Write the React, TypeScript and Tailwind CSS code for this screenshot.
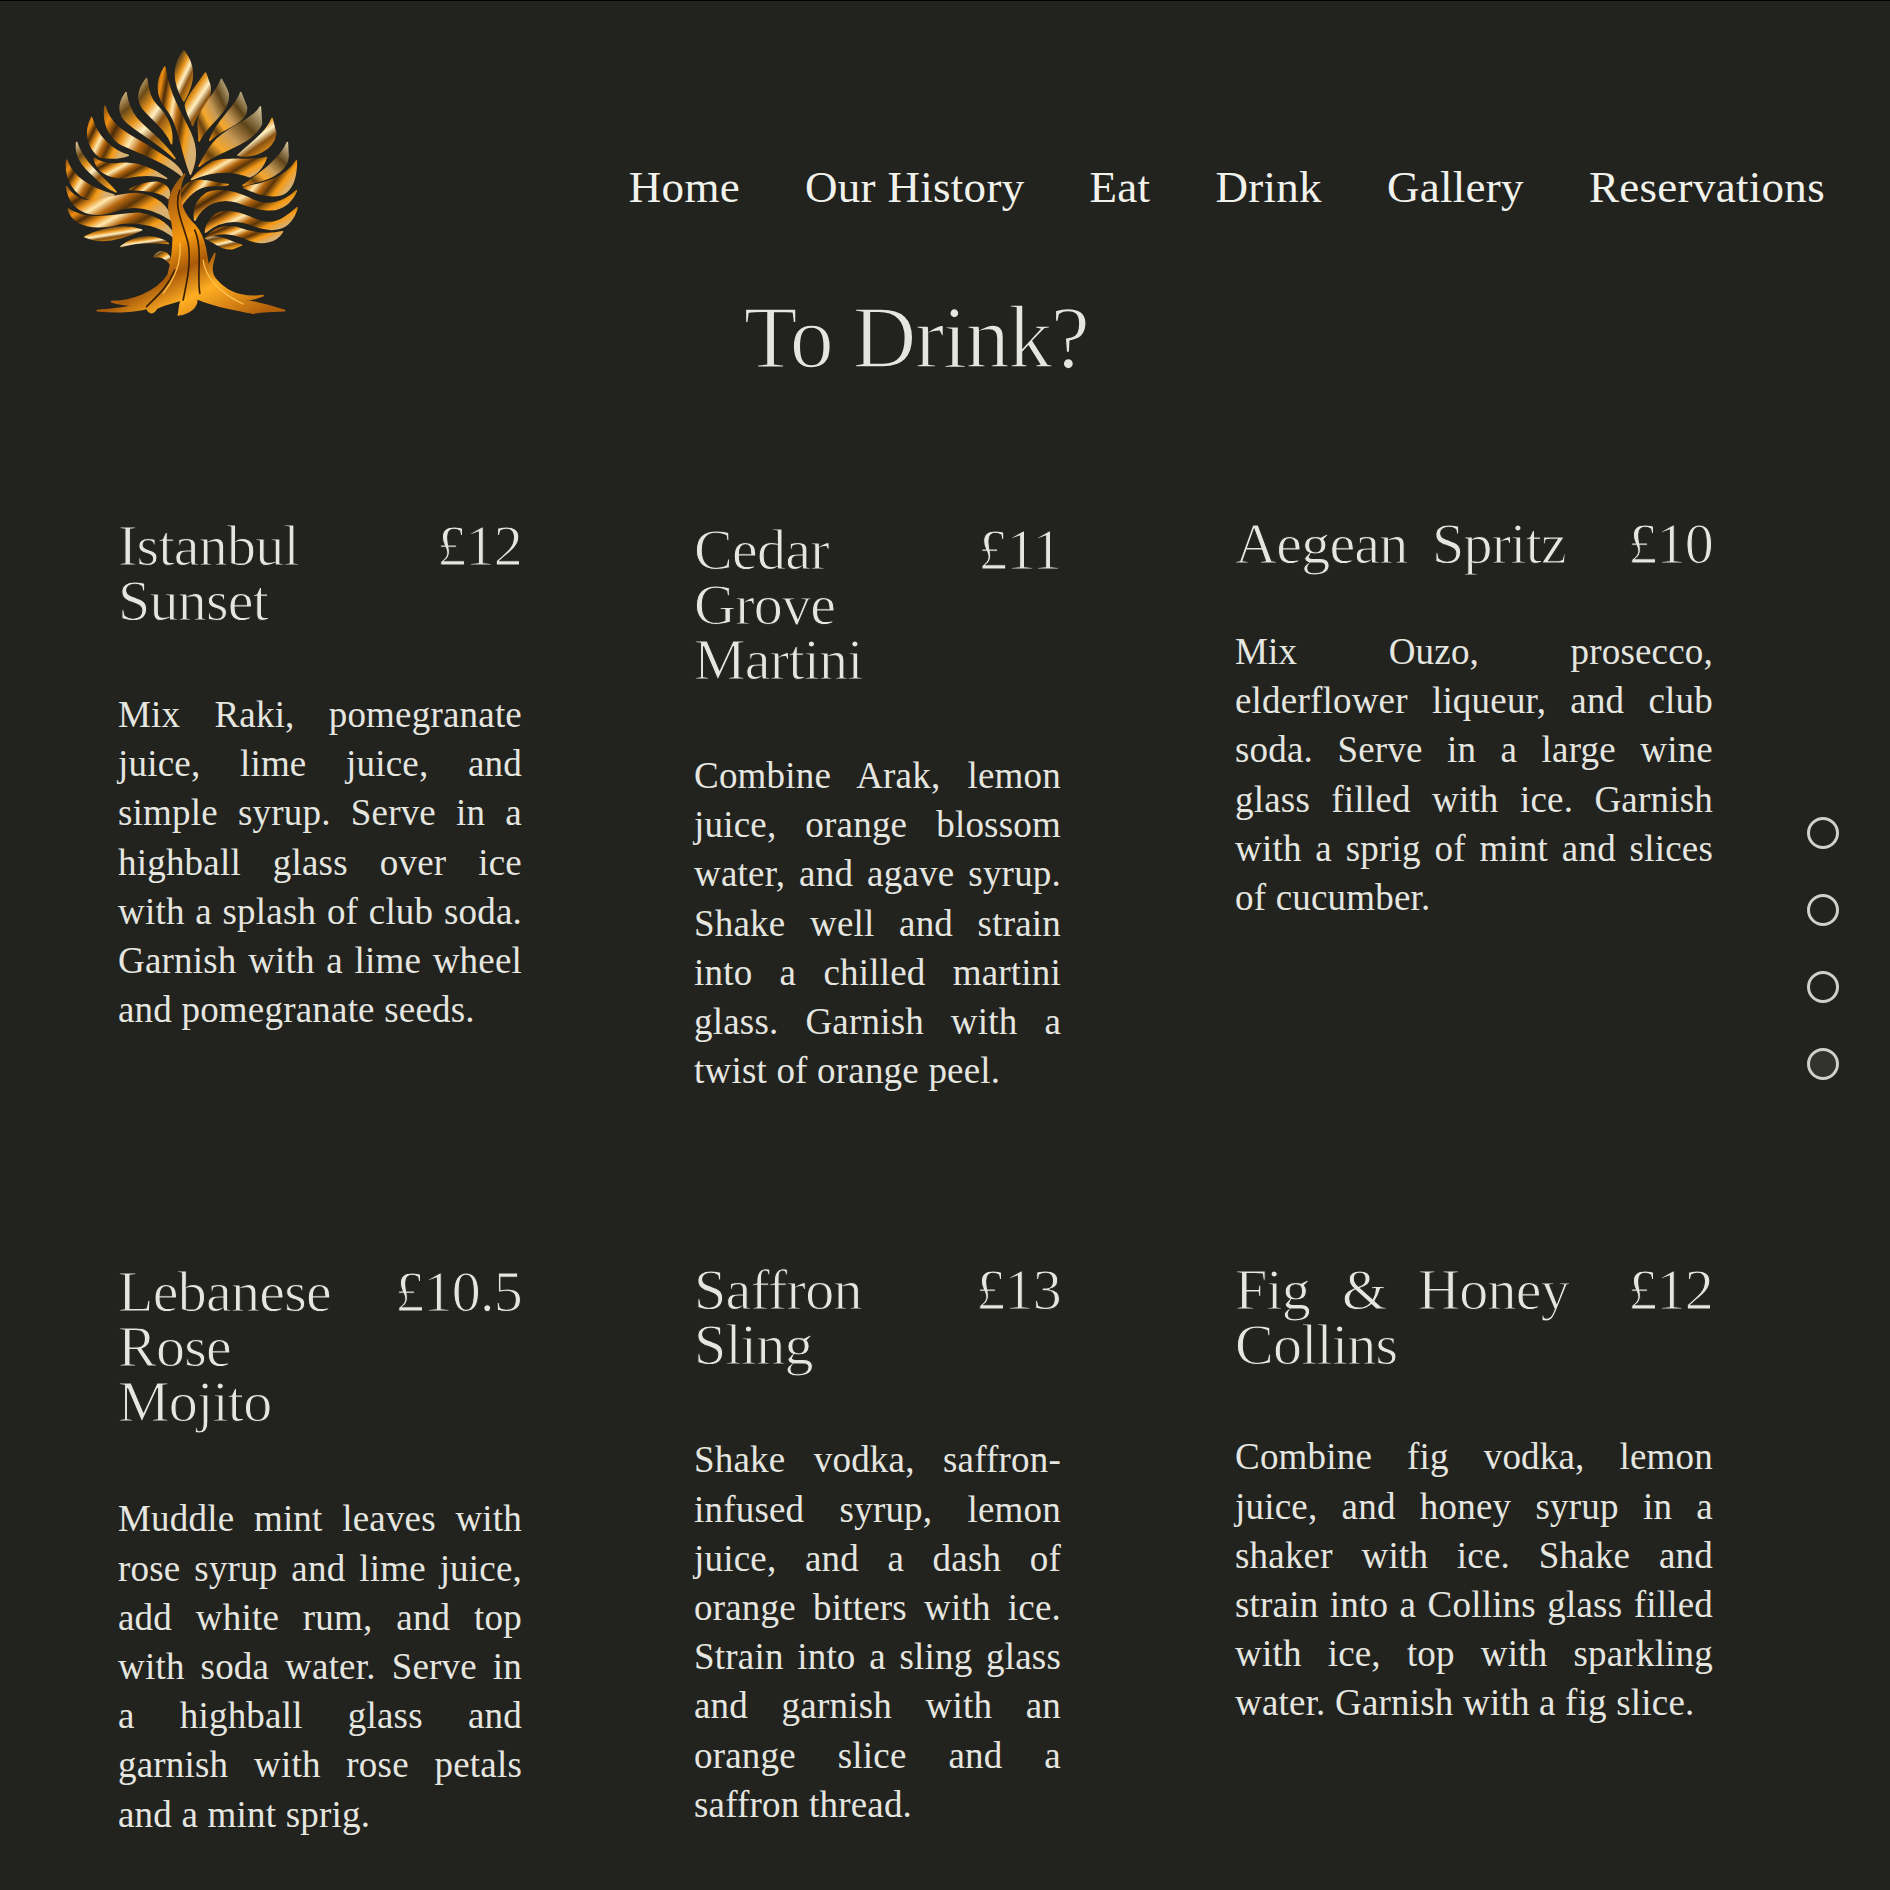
const navItems = ["Home", "Our History", "Eat", "Drink", "Gallery", "Reservations"];

type Drink = {
  title: string[];
  spreadWidth?: string;
  price: string;
  lines: string[];
  className: string;
  bodyClass: string;
};

const drinks: Drink[] = [
  {
    title: ["Istanbul", "Sunset"],
    price: "£12",
    className: "mt-[2px]",
    bodyClass: "mt-[62px]",
    lines: [
      "Mix Raki, pomegranate",
      "juice, lime juice, and",
      "simple syrup. Serve in a",
      "highball glass over ice",
      "with a splash of club soda.",
      "Garnish with a lime wheel",
      "and pomegranate seeds.",
    ],
  },
  {
    title: ["Cedar", "Grove", "Martini"],
    price: "£11",
    className: "mt-[6px] pr-[2px]",
    bodyClass: "mt-[64px]",
    lines: [
      "Combine Arak, lemon",
      "juice, orange blossom",
      "water, and agave syrup.",
      "Shake well and strain",
      "into a chilled martini",
      "glass. Garnish with a",
      "twist of orange peel.",
    ],
  },
  {
    title: ["Aegean Spritz"],
    spreadWidth: "w-[331px]",
    price: "£10",
    className: "",
    bodyClass: "mt-[56px]",
    lines: [
      "Mix Ouzo, prosecco,",
      "elderflower liqueur, and club",
      "soda. Serve in a large wine",
      "glass filled with ice. Garnish",
      "with a sprig of mint and slices",
      "of cucumber.",
    ],
  },
  {
    title: ["Lebanese", "Rose", "Mojito"],
    price: "£10.5",
    className: "mt-[2px]",
    bodyClass: "mt-[65px]",
    lines: [
      "Muddle mint leaves with",
      "rose syrup and lime juice,",
      "add white rum, and top",
      "with soda water. Serve in",
      "a highball glass and",
      "garnish with rose petals",
      "and a mint sprig.",
    ],
  },
  {
    title: ["Saffron", "Sling"],
    price: "£13",
    className: "pr-[2px]",
    bodyClass: "mt-[63px]",
    lines: [
      "Shake vodka, saffron-",
      "infused syrup, lemon",
      "juice, and a dash of",
      "orange bitters with ice.",
      "Strain into a sling glass",
      "and garnish with an",
      "orange slice and a",
      "saffron thread.",
    ],
  },
  {
    title: ["Fig & Honey", "Collins"],
    spreadWidth: "w-[334px]",
    price: "£12",
    className: "",
    bodyClass: "mt-[60px]",
    lines: [
      "Combine fig vodka, lemon",
      "juice, and honey syrup in a",
      "shaker with ice. Shake and",
      "strain into a Collins glass filled",
      "with ice, top with sparkling",
      "water. Garnish with a fig slice.",
    ],
  },
];

const leaves: [string, string][] = [
  ["M432 62C405 100 392 140 432 212C472 140 460 100 432 62Z", "url(#gold2)"],
  ["M375 110C350 150 345 190 380 235C420 285 420 350 452 432C475 380 470 340 440 285C420 240 385 190 375 110Z", "url(#gold1)"],
  ["M497 128C470 170 440 200 437 225C440 250 455 270 458 285C470 240 520 220 510 165Z", "url(#gold2)"],
  ["M545 147C530 190 490 220 475 270C475 295 478 315 478 332C500 280 570 250 565 190C560 170 550 160 545 147Z", "url(#gold3)"],
  ["M603 187C590 230 530 270 510 330C550 290 625 280 620 230Z", "url(#gold3)"],
  ["M662 230C640 270 560 290 520 340C500 365 490 385 478 408C530 360 640 345 665 280Z", "url(#gold3)"],
  ["M697 265C680 310 630 340 595 375C640 385 700 360 708 310Z", "url(#gold2)"],
  ["M743 337C720 390 660 430 610 466C680 450 740 430 745 380Z", "url(#gold3)"],
  ["M770 392C740 440 680 460 612 472C650 490 710 510 740 485C765 465 770 430 770 392Z", "url(#gold1)"],
  ["M680 382C640 395 560 380 520 395C490 410 470 430 455 448C520 420 580 420 630 440C655 430 670 410 680 382Z", "url(#gold1)"],
  ["M565 463C520 460 480 440 445 460C420 480 410 510 415 545C430 510 460 480 490 470C520 462 545 470 565 463Z", "url(#gold1)"],
  ["M770 482C730 520 680 530 640 510C600 490 540 470 500 490C470 510 460 540 465 570C490 520 540 500 590 515C650 535 730 570 770 482Z", "url(#gold1)"],
  ["M772 533C730 570 700 590 650 570C610 550 550 530 520 560C505 575 497 590 497 606C540 570 590 565 640 585C690 605 750 610 772 533Z", "url(#gold1)"],
  ["M728 605C690 615 640 610 590 592C550 585 520 595 497 625C540 600 590 610 630 630C670 645 710 635 728 605Z", "url(#gold1)"],
  ["M605 645C575 640 540 610 500 625C530 640 550 660 580 655Z", "url(#gold2)"],
  ["M320 145C300 170 285 200 310 235C340 270 380 300 395 340C400 300 385 260 350 225C325 200 325 170 320 145Z", "url(#gold2)"],
  ["M258 187C235 220 235 250 260 275C300 310 360 340 405 385C370 330 320 300 290 265C270 240 262 215 258 187Z", "url(#gold2)"],
  ["M195 228C190 270 200 310 240 340C300 370 370 390 430 440C420 400 370 380 320 345C270 315 210 290 195 228Z", "url(#gold1)"],
  ["M155 262C135 300 140 350 180 380C210 385 240 385 265 375C220 365 170 320 155 262Z", "url(#gold1)"],
  ["M163 385C170 420 200 445 260 442C300 435 340 430 380 445C340 415 290 395 240 400C210 405 185 400 163 385Z", "url(#gold1)"],
  ["M110 337C105 380 130 410 165 440C185 460 205 475 228 485C190 440 130 400 110 337Z", "url(#gold2)"],
  ["M80 390C75 440 100 500 160 510C185 512 205 505 222 495C170 480 100 450 80 390Z", "url(#gold1)"],
  ["M80 470C90 540 150 570 230 540C290 520 350 540 395 570C385 530 350 495 290 490C230 490 170 520 130 510C105 500 90 490 80 470Z", "url(#gold1)"],
  ["M85 537C100 590 170 600 240 580C300 570 370 590 405 625C395 590 360 560 300 550C230 550 150 580 85 537Z", "url(#gold1)"],
  ["M135 620C180 640 240 630 305 600C260 585 200 590 135 620Z", "url(#gold2)"],
  ["M243 650C290 635 340 635 385 640C350 615 290 610 243 650Z", "url(#gold2)"],
  ["M270 478C310 480 360 480 385 505C395 485 385 465 355 457C320 455 295 465 270 478Z", "url(#gold1)"],
  ["M343 680C360 655 390 660 398 710C385 690 365 675 343 680Z", "url(#gold2)"],
  [
    "M435 432C395 470 375 520 395 570C405 610 400 680 385 735C350 790 270 815 215 815C240 825 270 825 290 825C250 835 210 838 172 842C230 848 290 845 320 835C330 852 340 852 350 835C380 820 410 815 425 810C415 830 420 850 415 855C450 850 475 830 470 805C520 830 600 840 640 850C650 845 735 842 735 842C680 825 640 815 610 810C640 810 660 800 670 797C610 805 560 790 525 745C505 715 525 690 525 670L505 710C500 670 495 610 455 575C425 545 405 490 435 432Z",
    "url(#trunk)",
  ],
];

function TreeLogo() {
  return (
    <svg viewBox="75 60 700 800" className="h-[267px] w-[233px] shrink-0">
      <defs>
        <linearGradient id="gold1" x1="0" y1="0" x2="1" y2="0.5">
          <stop offset="0" stopColor="#8a5212" />
          <stop offset="0.12" stopColor="#f08f12" />
          <stop offset="0.24" stopColor="#4a2a08" />
          <stop offset="0.36" stopColor="#e8901a" />
          <stop offset="0.46" stopColor="#ffe9b0" />
          <stop offset="0.58" stopColor="#b8680f" />
          <stop offset="0.7" stopColor="#5a3508" />
          <stop offset="0.84" stopColor="#f59a14" />
          <stop offset="1" stopColor="#d8b070" />
        </linearGradient>
        <linearGradient id="gold2" x1="0" y1="0" x2="0.7" y2="1">
          <stop offset="0" stopColor="#e0c48e" />
          <stop offset="0.22" stopColor="#6a4a18" />
          <stop offset="0.42" stopColor="#e8951c" />
          <stop offset="0.58" stopColor="#fff0c4" />
          <stop offset="0.74" stopColor="#8a5210" />
          <stop offset="1" stopColor="#f0a020" />
        </linearGradient>
        <linearGradient id="gold3" x1="1" y1="0" x2="0" y2="1">
          <stop offset="0" stopColor="#d8c8a0" />
          <stop offset="0.28" stopColor="#5e4318" />
          <stop offset="0.5" stopColor="#c89a58" />
          <stop offset="0.68" stopColor="#f6a72a" />
          <stop offset="0.82" stopColor="#6a4210" />
          <stop offset="1" stopColor="#ef9012" />
        </linearGradient>
        <linearGradient id="trunk" x1="0.15" y1="0" x2="0.85" y2="1">
          <stop offset="0" stopColor="#6e4614" />
          <stop offset="0.25" stopColor="#b8680e" />
          <stop offset="0.45" stopColor="#f5980f" />
          <stop offset="0.6" stopColor="#a85a0a" />
          <stop offset="0.75" stopColor="#ffae22" />
          <stop offset="1" stopColor="#b4600a" />
        </linearGradient>
      </defs>
      {leaves.map(([d, fill]) => (
        <path key={d} d={d} fill={fill} stroke={fill} strokeWidth="5" strokeLinejoin="round" />
      ))}
      <g fill="none" stroke="#3a2006" strokeWidth="5" strokeLinecap="round">
        <path d="M420 480C400 530 430 580 445 640C455 700 440 760 430 810" />
        <path d="M465 600C490 660 470 730 480 790" />
        <path d="M405 720C385 770 350 800 320 830" />
      </g>
      <g fill="none" stroke="#ffc04a" strokeWidth="4" strokeLinecap="round">
        <path d="M490 690C495 740 540 790 610 822" />
        <path d="M420 640C425 690 410 740 370 790" />
      </g>
    </svg>
  );
}

function DrinkCard({ title, spreadWidth, price, lines, className, bodyClass }: Drink) {
  return (
    <article className={className}>
      <div className="flex items-start justify-between font-['Liberation_Serif',serif] text-[58px] leading-[55px] tracking-[-0.75px] text-[#e6e6e0] [-webkit-text-stroke:1px_#22231e]">
        <h2 className={spreadWidth}>
          {title.map((line, i) => (
            <span
              key={line}
              className={
                spreadWidth && i === 0
                  ? "block [text-align-last:justify]"
                  : "block whitespace-nowrap"
              }
            >
              {line}
            </span>
          ))}
        </h2>
        <span>{price}</span>
      </div>
      <p
        className={`${bodyClass} font-['Liberation_Serif',serif] text-[37px] leading-[49.2px] tracking-[0.2px] text-[#e6e6e0]`}
      >
        {lines.map((line, i) => (
          <span
            key={line}
            className={
              i === lines.length - 1
                ? "block whitespace-nowrap"
                : "block [text-align-last:justify]"
            }
          >
            {line}
          </span>
        ))}
      </p>
    </article>
  );
}

export default function App() {
  return (
    <main className="relative h-[1890px] overflow-hidden border-t border-black bg-[#22231e] text-[#f2f2ec]">
      <header className="flex items-start justify-between pl-[65px] pr-[65px] pt-[49px]">
        <TreeLogo />
        <nav className="mt-[109px] flex gap-[65px] font-['Liberation_Serif',serif] text-[45px] leading-[56px] tracking-[0.3px]">
          {navItems.map((item) => (
            <a key={item} href="#" className="whitespace-nowrap">
              {item}
            </a>
          ))}
        </nav>
      </header>

      <h1 className="-mt-[29px] pr-[58px] text-center font-['Liberation_Serif',serif] text-[88px] leading-[100px] tracking-[-1.5px] text-[#e6e6e0] [-webkit-text-stroke:1.6px_#22231e]">
        To Drink?
      </h1>

      <section className="mt-[128px] grid grid-cols-[404px_369px_478px] gap-x-[172px] gap-y-[167px] pl-[118px]">
        {drinks.map((drink) => (
          <DrinkCard key={drink.title.join(" ")} {...drink} />
        ))}
      </section>

      <div className="absolute left-[1807px] top-[816px] flex flex-col gap-[45px]">
        <span className="size-[32px] rounded-full border-[3px] border-[#d0d0ca]" />
        <span className="size-[32px] rounded-full border-[3px] border-[#d0d0ca]" />
        <span className="size-[32px] rounded-full border-[3px] border-[#d0d0ca]" />
        <span className="size-[32px] rounded-full border-[3px] border-[#d0d0ca] bg-[#33332e]" />
      </div>
    </main>
  );
}
